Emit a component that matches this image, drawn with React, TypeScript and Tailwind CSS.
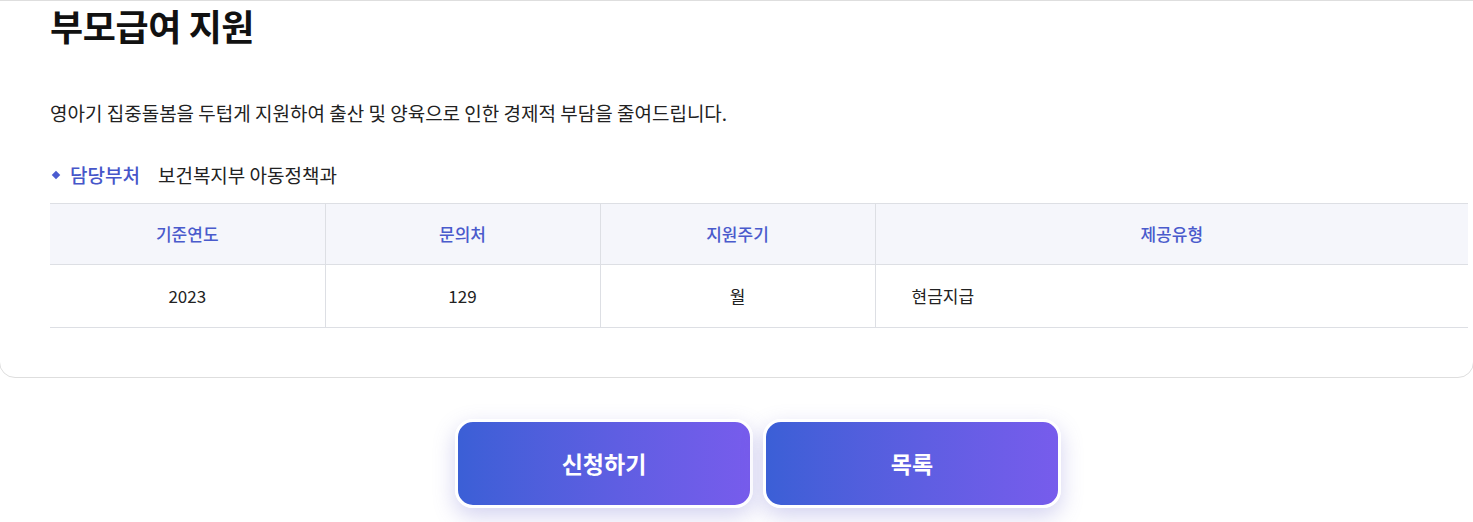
import React from "react";

const FONT = "font-['Noto_Sans_CJK_KR','Noto_Sans',sans-serif]";

const columns = ["기준연도", "문의처", "지원주기", "제공유형"];

export default function App() {
  return (
    <div className={`${FONT} min-h-[522px] w-full overflow-hidden bg-white text-[#222]`}>
      <section className="relative -mx-px rounded-b-2xl border border-[#dedede] bg-white pb-[49px] pl-[50px] pr-[5px]">
        <h1 className="mt-[3px] text-[36px] font-bold leading-[42px] tracking-[-0.4px] text-[#111]">
          부모급여 지원
        </h1>
        <p className="mt-[54px] text-[19px] leading-[26px]">
          영아기 집중돌봄을 두텁게 지원하여 출산 및 양육으로 인한 경제적 부담을 줄여드립니다.
        </p>
        <div className="mt-[36px] flex items-center text-[19px] leading-[26px]">
          <span className="ml-[3px] mr-[11px] inline-block h-[6px] w-[6px] rotate-45 bg-[#4a5bd0]" />
          <span className="font-medium text-[#4656c9]">담당부처</span>
          <span className="ml-[18px]">보건복지부 아동정책과</span>
        </div>
        <table className="mt-[15px] w-full table-fixed border-collapse text-[17px]">
          <colgroup>
            <col className="w-[275px]" />
            <col className="w-[275px]" />
            <col className="w-[275px]" />
            <col />
          </colgroup>
          <thead>
            <tr className="h-[61px] border-y border-[#dddfe4] bg-[#f5f6fb]">
              {columns.map((c, i) => (
                <th
                  key={c}
                  className={`font-medium text-[#4a5bcc] ${i > 0 ? "border-l border-[#dddfe4]" : ""}`}
                >
                  {c}
                </th>
              ))}
            </tr>
          </thead>
          <tbody>
            <tr className="h-[63px] border-b border-[#dddfe4]">
              <td className="text-center">2023</td>
              <td className="border-l border-[#dddfe4] text-center">129</td>
              <td className="border-l border-[#dddfe4] text-center">월</td>
              <td className="border-l border-[#dddfe4] pl-[36px] text-left">현금지급</td>
            </tr>
          </tbody>
        </table>
      </section>

      <div className="mt-[41px] flex justify-center gap-[10px] pl-[43px]">
        {["신청하기", "목록"].map((label) => (
          <button
            key={label}
            className="flex h-[89px] w-[298px] items-center justify-center rounded-[18px] border-[3px] border-white bg-gradient-to-r from-[#3b5fd6] to-[#775cec] text-[23px] font-bold text-white shadow-[0_8px_22px_rgba(98,92,200,0.28)]"
          >
            {label}
          </button>
        ))}
      </div>
    </div>
  );
}
